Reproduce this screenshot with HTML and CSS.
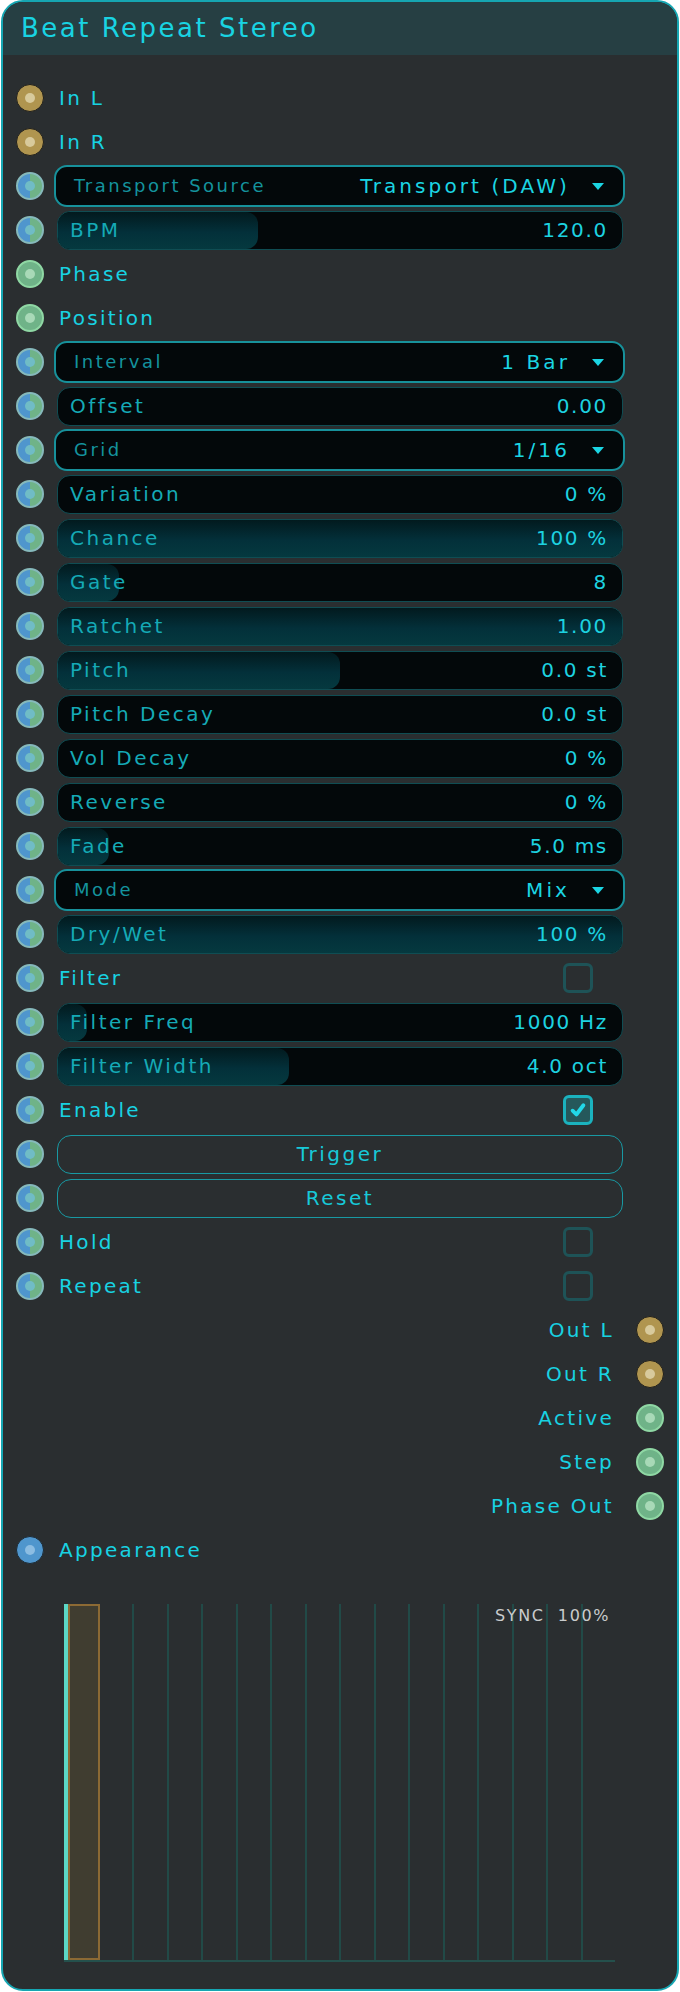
FILE: index.html
```html
<!DOCTYPE html>
<html>
<head>
<meta charset="utf-8">
<title>Beat Repeat Stereo</title>
<link rel="stylesheet" href="styles.css">
</head>
<body>
<div class="panel">
  <div class="header"><span class="title">Beat Repeat Stereo</span></div>
  <div class="rows">
    <div class="row"><span class="port gold"></span><span class="label">In L</span></div>
    <div class="row"><span class="port gold"></span><span class="label">In R</span></div>
    <div class="row"><span class="port mix"></span><div class="select"><span class="sel-label">Transport Source</span><span class="sel-value">Transport (DAW)</span><span class="caret"></span></div></div>
    <div class="row"><span class="port mix"></span><div class="slider"><div class="fill" style="width:35.5%"></div><span class="s-label">BPM</span><span class="s-value">120.0</span></div></div>
    <div class="row"><span class="port green"></span><span class="label">Phase</span></div>
    <div class="row"><span class="port green"></span><span class="label">Position</span></div>
    <div class="row"><span class="port mix"></span><div class="select"><span class="sel-label">Interval</span><span class="sel-value">1 Bar</span><span class="caret"></span></div></div>
    <div class="row"><span class="port mix"></span><div class="slider"><span class="s-label">Offset</span><span class="s-value">0.00</span></div></div>
    <div class="row"><span class="port mix"></span><div class="select"><span class="sel-label">Grid</span><span class="sel-value">1/16</span><span class="caret"></span></div></div>
    <div class="row"><span class="port mix"></span><div class="slider"><span class="s-label">Variation</span><span class="s-value">0 %</span></div></div>
    <div class="row"><span class="port mix"></span><div class="slider"><div class="fill" style="width:100%"></div><span class="s-label">Chance</span><span class="s-value">100 %</span></div></div>
    <div class="row"><span class="port mix"></span><div class="slider"><div class="fill" style="width:10.8%"></div><span class="s-label">Gate</span><span class="s-value">8</span></div></div>
    <div class="row"><span class="port mix"></span><div class="slider"><div class="fill" style="width:100%"></div><span class="s-label">Ratchet</span><span class="s-value">1.00</span></div></div>
    <div class="row"><span class="port mix"></span><div class="slider"><div class="fill" style="width:50%"></div><span class="s-label">Pitch</span><span class="s-value">0.0 st</span></div></div>
    <div class="row"><span class="port mix"></span><div class="slider"><span class="s-label">Pitch Decay</span><span class="s-value">0.0 st</span></div></div>
    <div class="row"><span class="port mix"></span><div class="slider"><span class="s-label">Vol Decay</span><span class="s-value">0 %</span></div></div>
    <div class="row"><span class="port mix"></span><div class="slider"><span class="s-label">Reverse</span><span class="s-value">0 %</span></div></div>
    <div class="row"><span class="port mix"></span><div class="slider"><div class="fill" style="width:9%"></div><span class="s-label">Fade</span><span class="s-value">5.0 ms</span></div></div>
    <div class="row"><span class="port mix"></span><div class="select"><span class="sel-label">Mode</span><span class="sel-value">Mix</span><span class="caret"></span></div></div>
    <div class="row"><span class="port mix"></span><div class="slider"><div class="fill" style="width:100%"></div><span class="s-label">Dry/Wet</span><span class="s-value">100 %</span></div></div>
    <div class="row"><span class="port mix"></span><span class="label">Filter</span><span class="check"></span></div>
    <div class="row"><span class="port mix"></span><div class="slider"><div class="fill" style="width:5.2%"></div><span class="s-label">Filter Freq</span><span class="s-value">1000 Hz</span></div></div>
    <div class="row"><span class="port mix"></span><div class="slider"><div class="fill" style="width:41%"></div><span class="s-label">Filter Width</span><span class="s-value">4.0 oct</span></div></div>
    <div class="row"><span class="port mix"></span><span class="label">Enable</span><span class="check on"><svg class="tick" viewBox="0 0 16 16" width="18" height="18"><path d="M3.2 8.6 L6.6 12 L12.8 3.8" fill="none" stroke="#22d8e8" stroke-width="3.4" stroke-linecap="round" stroke-linejoin="round"/></svg></span></div>
    <div class="row"><span class="port mix"></span><div class="button">Trigger</div></div>
    <div class="row"><span class="port mix"></span><div class="button">Reset</div></div>
    <div class="row"><span class="port mix"></span><span class="label">Hold</span><span class="check"></span></div>
    <div class="row"><span class="port mix"></span><span class="label">Repeat</span><span class="check"></span></div>
    <div class="row out"><span class="label">Out L</span><span class="port gold"></span></div>
    <div class="row out"><span class="label">Out R</span><span class="port gold"></span></div>
    <div class="row out"><span class="label">Active</span><span class="port green"></span></div>
    <div class="row out"><span class="label">Step</span><span class="port green"></span></div>
    <div class="row out"><span class="label">Phase Out</span><span class="port green"></span></div>
    <div class="row"><span class="port blue"></span><span class="label">Appearance</span></div>
  </div>
  <div class="chart">
    <div class="playhead"></div>
    <div class="step current"></div>
    <div class="cell first"></div>
    <div class="cell"></div><div class="cell"></div><div class="cell"></div><div class="cell"></div>
    <div class="cell"></div><div class="cell"></div><div class="cell"></div><div class="cell"></div>
    <div class="cell"></div><div class="cell"></div><div class="cell"></div><div class="cell"></div>
    <div class="cell"></div><div class="cell"></div>
    <div class="sync">SYNC&nbsp;&nbsp;100%</div>
  </div>
</div>
</body>
</html>
```

FILE: styles.css
```css
* { box-sizing: border-box; }

html, body {
  margin: 0;
  padding: 0;
  background: #ffffff;
}

body {
  font-family: "DejaVu Sans", "Liberation Sans", sans-serif;
  color: #18d0e0;
}

.panel {
  width: 678px;
  margin: 0 1px;
  border: 2px solid #16a6b2;
  border-radius: 22px;
  overflow: hidden;
  background: #2a2e30;
  padding-bottom: 27px;
}

.header {
  height: 53px;
  background: #263f43;
  display: flex;
  align-items: center;
  padding-left: 18px;
}

.title {
  font-size: 26px;
  letter-spacing: 2.5px;
  color: #19d3e2;
  line-height: 1;
  padding-bottom: 2px;
}

.rows {
  padding: 21px 13px 0 13px;
}

.row {
  height: 44px;
  display: flex;
  align-items: center;
}

.row.out {
  justify-content: flex-end;
}

.port {
  flex: none;
  width: 28px;
  height: 28px;
  border-radius: 50%;
  position: relative;
}

.port::after {
  content: "";
  position: absolute;
  left: 50%;
  top: 50%;
  width: 10px;
  height: 10px;
  margin: -5px 0 0 -5px;
  border-radius: 50%;
}

.port.gold {
  background: #b0954f;
  border: 1.5px solid #1f1f1c;
}
.port.gold::after { background: #d8ca9c; }

.port.green {
  background: #6fb388;
  border: 2px solid #8fd8a4;
}
.port.green::after { background: #a8d9b7; }

.port.mix {
  background: linear-gradient(90deg, #4f96cd 0 50%, #6fb388 50% 100%);
  border: 2px solid #86b9bb;
}
.port.mix::after { background: #70bcc6; }

.port.blue {
  background: #4f96cd;
  border: 1.5px solid #1d2a33;
}
.port.blue::after { background: #8cbde2; }

.label {
  font-size: 20px;
  letter-spacing: 2.3px;
  color: #18d2e2;
  margin-left: 15px;
  flex: 1;
  line-height: 1;
}

.row.out .label {
  flex: none;
  margin-left: 0;
  margin-right: 22px;
}

/* sliders */
.slider {
  flex: 1;
  margin-left: 13px;
  margin-right: 41px;
  height: 39px;
  border: 1px solid #0f4d53;
  border-radius: 13px;
  background: #03080a;
  position: relative;
  overflow: hidden;
  display: flex;
  align-items: center;
  justify-content: space-between;
  padding: 0 14px 0 12px;
}

.fill {
  position: absolute;
  left: 0;
  top: 0;
  bottom: 0;
  border-radius: 12px;
  background: linear-gradient(180deg, #021a1e 0%, #03303a 55%, #05393f 100%);
}

.s-label, .s-value {
  position: relative;
  font-size: 20px;
  line-height: 1;
}

.s-label { color: #15aab6; letter-spacing: 2.5px; }
.s-value { color: #1dd2e0; letter-spacing: 1.7px; }

/* selects */
.select {
  flex: 1;
  margin-left: 10px;
  margin-right: 39px;
  height: 42px;
  border: 2px solid #17919b;
  border-radius: 13px;
  background: #03080a;
  display: flex;
  align-items: center;
  padding: 0 19px 0 18px;
}

.sel-label {
  flex: 1;
  font-size: 18px;
  letter-spacing: 2.5px;
  color: #14939d;
  line-height: 1;
}

.sel-value {
  font-size: 20px;
  letter-spacing: 3.1px;
  color: #1bd5e3;
  line-height: 1;
  margin-right: 22px;
}

.caret {
  flex: none;
  width: 0;
  height: 0;
  border-left: 6px solid transparent;
  border-right: 6px solid transparent;
  border-top: 7px solid #1bd5e3;
  margin-top: 1px;
}

/* checkboxes */
.check {
  flex: none;
  width: 30px;
  height: 30px;
  border: 3px solid #1e5357;
  border-radius: 6px;
  margin-right: 71px;
  display: flex;
  align-items: center;
  justify-content: center;
}

.check.on {
  border-color: #1bb2be;
  background: #25585b;
}

.tick { display: block; }

/* buttons */
.button {
  flex: 1;
  margin-left: 13px;
  margin-right: 41px;
  height: 39px;
  border: 1.5px solid #1899a3;
  border-radius: 14px;
  display: flex;
  align-items: center;
  justify-content: center;
  font-size: 20px;
  letter-spacing: 2.5px;
  color: #17c9d8;
  line-height: 1;
}

/* chart */
.chart {
  position: relative;
  margin: 32px 0 0 61px;
  width: 551px;
  height: 358px;
  display: flex;
  border-bottom: 2px solid #24504c;
}

.playhead {
  flex: none;
  width: 4px;
  background: #5cd8c6;
}

.step.current {
  flex: none;
  width: 32px;
  border: 2px solid #8c6a34;
  background: #403d30;
}

.cell {
  flex: 1;
  border-left: 2px solid #214a47;
}

.cell.first {
  border-left: none;
}

.sync {
  position: absolute;
  top: 4px;
  right: 5px;
  font-size: 16px;
  letter-spacing: 1.6px;
  color: #c9cccc;
  line-height: 16px;
}
```
